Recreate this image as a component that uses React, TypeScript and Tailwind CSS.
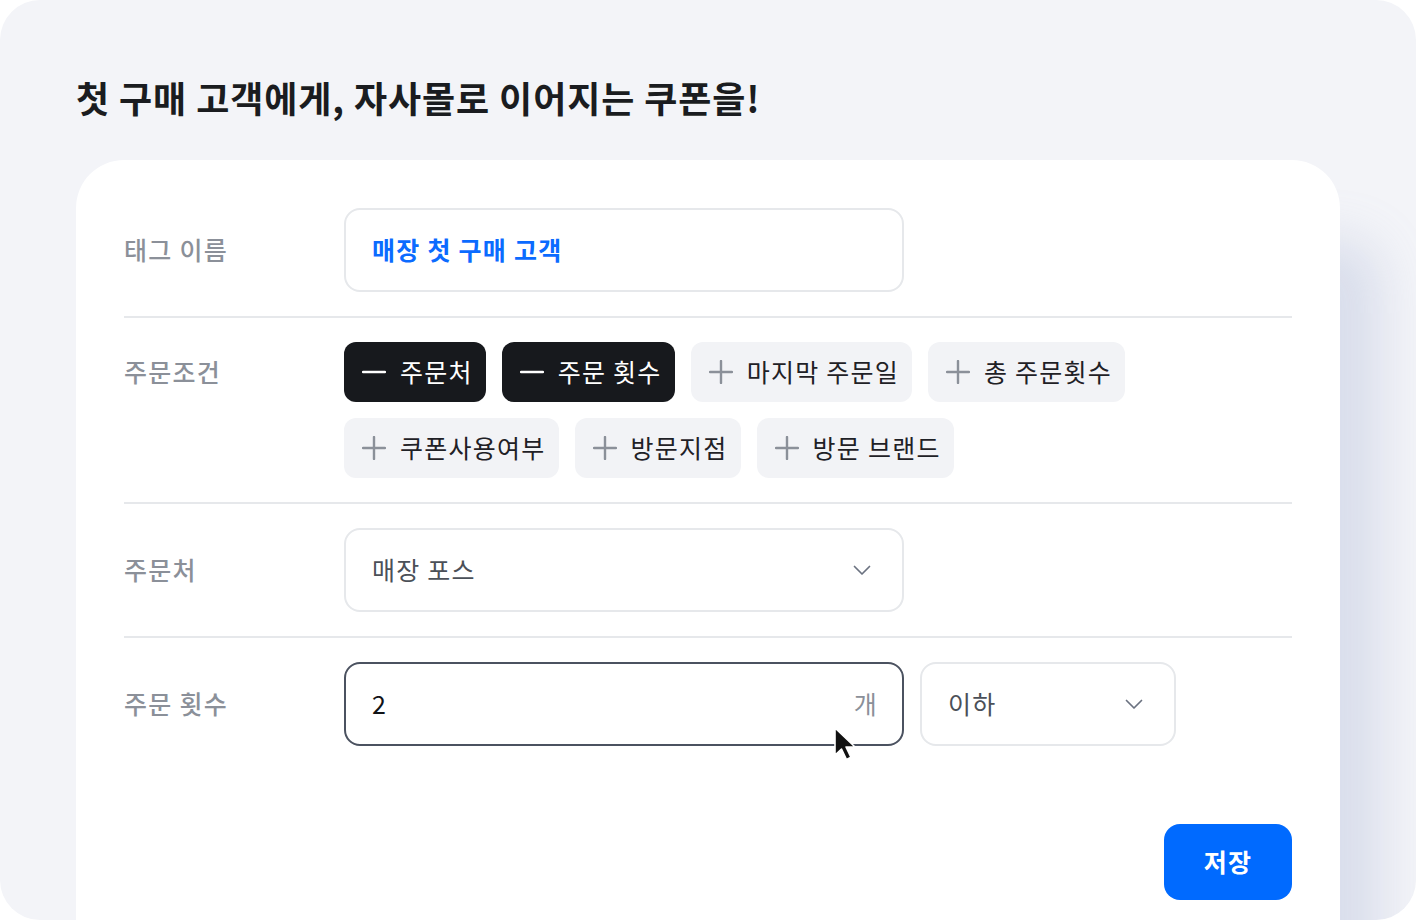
import React from "react";

const FONT = { fontFamily: '"Noto Sans CJK KR", "Noto Sans", sans-serif' };

function Minus({ color }: { color: string }) {
  return (
    <svg width="24" height="24" viewBox="0 0 24 24" fill="none">
      <path d="M1 12h22" stroke={color} strokeWidth="2.4" strokeLinecap="round" />
    </svg>
  );
}

function Plus({ color }: { color: string }) {
  return (
    <svg width="24" height="24" viewBox="0 0 24 24" fill="none">
      <path d="M1 12h22M12 1v22" stroke={color} strokeWidth="2.4" strokeLinecap="round" />
    </svg>
  );
}

function Chevron() {
  return (
    <svg width="20" height="12" viewBox="0 0 20 12" fill="none">
      <path d="M2.5 2.5l7.5 7.5 7.5-7.5" stroke="#6b7280" strokeWidth="1.7" strokeLinecap="round" strokeLinejoin="round" />
    </svg>
  );
}

function Chip({ label, active }: { label: string; active?: boolean }) {
  return (
    <div
      className={
        active
          ? "flex h-[60px] items-center gap-[14px] rounded-[12px] bg-[#17191d] pl-[18px] pr-[13px] text-[25px] tracking-[0.05em] text-white"
          : "flex h-[60px] items-center gap-[14px] rounded-[12px] bg-[#f2f3f6] pl-[18px] pr-[13px] text-[25px] tracking-[0.05em] text-[#1f2126]"
      }
    >
      {active ? <Minus color="#ffffff" /> : <Plus color="#8b9099" />}
      <span className="whitespace-pre">{label}</span>
    </div>
  );
}

function Label({ children, h }: { children: React.ReactNode; h: string }) {
  return (
    <div
      className={`flex w-[220px] shrink-0 items-center text-[25px] font-medium tracking-[0.05em] text-[#8b9099] ${h}`}
    >
      {children}
    </div>
  );
}

export default function App() {
  return (
    <div className="min-h-[920px] w-full bg-white" style={FONT}>
      <div className="relative h-[920px] w-[1416px] overflow-hidden rounded-[40px] bg-[#f3f4f8] px-[76px]">
        <h1 className="pt-[76px] text-[36px] font-bold leading-[42px] tracking-[0.025em] text-[#1a1c20]">
          첫 구매 고객에게, 자사몰로 이어지는 쿠폰을!
        </h1>
        <div className="mt-[42px] h-[900px] w-[1264px] rounded-t-[48px] bg-white px-[48px] pt-[48px] shadow-[50px_70px_50px_-10px_rgba(150,165,205,0.28)]">
          {/* Row 1 */}
          <div className="flex border-b-2 border-[#e6e8eb] pb-[24px]">
            <Label h="h-[84px]">태그 이름</Label>
            <div className="flex h-[84px] w-[560px] items-center rounded-[16px] border-2 border-[#e6e8eb] px-[26px] text-[25px] font-semibold tracking-[0.05em] text-[#0b6bff]">
              매장 첫 구매 고객
            </div>
          </div>
          {/* Row 2 */}
          <div className="flex border-b-2 border-[#e6e8eb] py-[24px]">
            <Label h="h-[60px]">주문조건</Label>
            <div className="flex w-[800px] flex-wrap gap-x-[16px] gap-y-[16px]">
              <Chip label="주문처" active />
              <Chip label="주문 횟수" active />
              <Chip label="마지막 주문일" />
              <Chip label="총 주문횟수" />
              <Chip label="쿠폰사용여부" />
              <Chip label="방문지점" />
              <Chip label="방문 브랜드" />
            </div>
          </div>
          {/* Row 3 */}
          <div className="flex border-b-2 border-[#e6e8eb] py-[24px]">
            <Label h="h-[84px]">주문처</Label>
            <div className="flex h-[84px] w-[560px] items-center justify-between rounded-[16px] border-2 border-[#e6e8eb] pl-[26px] pr-[30px] text-[25px] tracking-[0.05em] text-[#4b5058]">
              <span>매장 포스</span>
              <Chevron />
            </div>
          </div>
          {/* Row 4 */}
          <div className="flex pt-[24px]">
            <Label h="h-[84px]">주문 횟수</Label>
            <div className="flex gap-[16px]">
              <div className="relative flex h-[84px] w-[560px] items-center justify-between rounded-[16px] border-2 border-[#4b5260] pl-[26px] pr-[24px] text-[25px] tracking-[0.05em]">
                <span className="text-[#111317]">2</span>
                <span className="text-[#8b9099]">개</span>
                <svg
                  className="absolute left-[487px] top-[62px]"
                  width="24"
                  height="36"
                  viewBox="0 0 24 36"
                  fill="none"
                >
                  <path
                    d="M2 2v27l6.5-6 5 10.5 4.5-2.2-5-10.3H22z"
                    fill="#111"
                    stroke="#fff"
                    strokeWidth="1.6"
                    strokeLinejoin="round"
                  />
                </svg>
              </div>
              <div className="flex h-[84px] w-[256px] items-center justify-between rounded-[16px] border-2 border-[#e6e8eb] pl-[26px] pr-[30px] text-[25px] tracking-[0.05em] text-[#4b5058]">
                <span>이하</span>
                <Chevron />
              </div>
            </div>
          </div>
          <div className="mt-[78px] flex justify-end">
            <button className="flex h-[76px] w-[128px] items-center justify-center rounded-[16px] bg-[#006aff] text-[25px] font-semibold tracking-[0.05em] text-white">
              저장
            </button>
          </div>
        </div>
      </div>
    </div>
  );
}
